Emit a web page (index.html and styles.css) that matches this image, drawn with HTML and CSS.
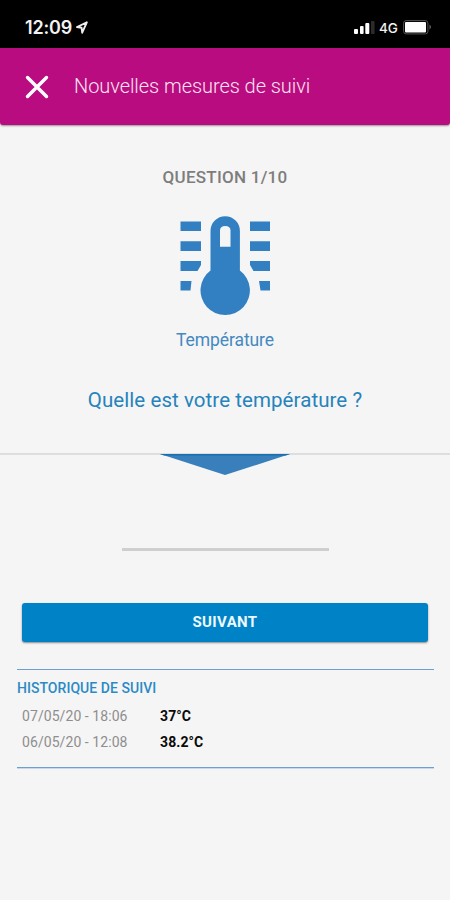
FILE: index.html
```html
<!DOCTYPE html>
<html lang="fr">
<head>
<meta charset="utf-8">
<title>Nouvelles mesures de suivi</title>
<link rel="stylesheet" href="styles.css">
</head>
<body>
<div class="status">
  <span class="time">12:09</span>
  <svg class="loc" width="12" height="13" viewBox="0 0 12 13"><path d="M10.8 1.3 1 6 5.600 6.800 6.200 11.700Z" fill="none" stroke="#eee" stroke-width="1.9" stroke-linejoin="round"/></svg>
  <svg class="bars" width="21" height="13" viewBox="0 0 21 13"><g fill="#fff"><rect x="0" y="8" width="4" height="5" rx="1"/><rect x="6" y="5" width="3.6" height="8" rx="1"/><rect x="11.3" y="2" width="4" height="11" rx="1"/></g><rect x="17" y="0" width="3.6" height="13" rx="1" fill="#2b2b2b"/></svg>
  <span class="net">4G</span>
  <svg class="battery" width="30" height="15" viewBox="0 0 30 15"><rect x=".6" y=".6" width="24.3" height="13.3" rx="2.5" fill="none" stroke="#555"/><rect x="2" y="2" width="21" height="10.5" rx="1" fill="#fff"/><path d="M26.5 4.5Q29.5 7 26.5 9.5Z" fill="#666"/></svg>
</div>
<header class="bar">
  <svg class="close" width="24" height="24" viewBox="0 0 24 24"><path d="M2.5 2.5 21.5 21.5M21.5 2.5 2.5 21.5" stroke="#fff" stroke-width="3.4" stroke-linecap="round"/></svg>
  <h1 class="title">Nouvelles mesures de suivi</h1>
</header>
<main>
  <section class="question">
    <div class="step"><span>QUESTION 1/10</span></div>
    <svg class="thermo" width="90" height="100" viewBox="0 0 90 100" fill="#3280c1">
      <path d="M.5 5.5H21V15H.5ZM.5 25.2H21V35H.5ZM.5 45H21V49L17.500 55H.5ZM.5 65H11.500L10.500 74.500H.5Z"/>
      <path d="M90 5.500H70V15H90ZM90 25.200H70V35H90ZM90 45H70V49L73.500 55H90ZM90 65H79L80.500 74.500H90Z"/>
      <path d="M30.500 15A14.700 14.700 0 0 1 59.900 15V54.500A24.700 24.700 0 1 1 30.500 54.500Z"/>
      <path d="M40 30.800V14.500Q40 10 45.250 10Q50.500 10 50.500 14.500V30.800Z" fill="#f5f5f5"/>
    </svg>
    <div class="label"><span>Température</span></div>
    <h2 class="ask"><span>Quelle est votre température ?</span></h2>
  </section>
  <section class="answer">
    <svg class="arrow" width="130" height="21" viewBox="0 0 130 21"><path d="M0 0H130L65 21Z" fill="#397fbb"/><path d="M0 0H130L126 1.500H4Z" fill="#1670b0"/></svg>
    <div class="field"></div>
    <button class="next"><span>SUIVANT</span></button>
  </section>
  <section class="history">
    <h3><span>HISTORIQUE DE SUIVI</span></h3>
    <div class="row"><span class="date">07/05/20 - 18:06</span><span class="value">37°C</span></div>
    <div class="row"><span class="date">06/05/20 - 12:08</span><span class="value">38.2°C</span></div>
  </section>
</main>
</body>
</html>
```
FILE: styles.css
```css
* { box-sizing: border-box; }
body { margin: 0; height: 900px; overflow: hidden; background: #f5f5f5; font-family: Roboto, sans-serif; }
svg { display: block; flex: none; }
h1, h2, h3 { margin: 0; }
.status { height: 48px; background: #000; color: #f2f2f2; display: flex; align-items: center; padding: 7px 17px 0 25px; }
.time { width: 47px; font: 600 18px/20px Inter, sans-serif; letter-spacing: -.2px; white-space: nowrap; }
.loc { margin-left: 4px; }
.bars { margin-left: auto; }
.net { width: 20px; margin: 0 4px 0 4px; font: 500 13.5px/16px Inter, sans-serif; white-space: nowrap; }
.bar { height: 77px; background: #b90c80; display: flex; align-items: center; padding-left: 25px; border-radius: 0 0 3px 3px; box-shadow: 0 1px 2px rgba(0,0,0,.4); }
.title { margin-left: 25px; margin-top: -1px; font-size: 20px; line-height: 24px; font-weight: 300; letter-spacing: -.06px; color: #fde3f2; white-space: nowrap; }
.question { height: 330px; border-bottom: 2px solid #dedede; display: flex; flex-direction: column; align-items: center; padding-top: 41px; white-space: nowrap; }
.step { font-size: 17px; line-height: 22px; font-weight: 500; letter-spacing: .25px; color: #7d7d7d; }
.thermo { margin-top: 28px; }
.label { margin-top: 13px; font-size: 17.5px; line-height: 22px; letter-spacing: -.08px; color: #4489c1; }
.ask { margin-top: 36px; font-size: 20.5px; line-height: 26px; font-weight: 400; letter-spacing: .07px; color: #2683bb; }
.answer { height: 214px; display: flex; flex-direction: column; align-items: center; margin-top: -1px; }
.field { width: 207px; height: 3px; margin-top: 73px; background: #cfcfcf; }
.next { width: 406px; height: 39px; margin-top: 52px; border: 0; border-radius: 3px; background: #0083c6; color: #edf8ff; font: 700 15px/20px Roboto, sans-serif; letter-spacing: .35px; box-shadow: 0 1px 2px rgba(0,0,0,.45); padding: 0 0 2px; }
.history { margin: 1px 16px 0 17px; height: 99px; border-top: 1px solid #69a1d2; border-bottom: 1px solid #69a1d2; box-shadow: 0 1px 0 #c9d9e8; padding-top: 8px; white-space: nowrap; }
.history h3 { font-size: 14px; line-height: 20px; font-weight: 500; letter-spacing: .04px; color: #2b8ac5; }
.row { display: flex; height: 26px; align-items: center; padding-left: 5px; font-size: 14px; line-height: 20px; }
.history h3 + .row { margin-top: 5px; }
.date { width: 138px; letter-spacing: .07px; color: #8e8e8e; }
.value { font-size: 14px; font-weight: 700; letter-spacing: .1px; color: #0a0a0a; }
```
